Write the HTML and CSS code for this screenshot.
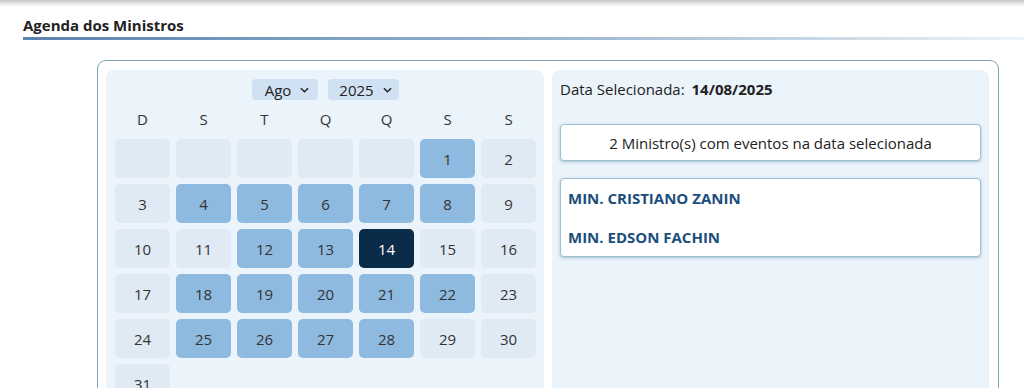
FILE: index.html
```html
<!DOCTYPE html>
<html lang="pt-BR">
<head>
<meta charset="utf-8">
<title>Agenda dos Ministros</title>
<link rel="stylesheet" href="styles.css">
</head>
<body>
<div class="topbar"></div>
<header class="page-head">
  <h1 class="page-title">Agenda dos Ministros</h1>
  <div class="title-rule"></div>
</header>
<main class="agenda">
  <section class="panel calendar">
    <div class="selects">
      <div class="sel sel-month">Ago <svg class="chev" viewBox="0 0 10 6" width="9" height="6"><path d="M1 1l4 4 4-4" fill="none" stroke="#222" stroke-width="1.6"/></svg></div>
      <div class="sel sel-year">2025 <svg class="chev" viewBox="0 0 10 6" width="9" height="6"><path d="M1 1l4 4 4-4" fill="none" stroke="#222" stroke-width="1.6"/></svg></div>
    </div>
    <div class="grid">
      <div class="dow">D</div><div class="dow">S</div><div class="dow">T</div><div class="dow">Q</div><div class="dow">Q</div><div class="dow">S</div><div class="dow">S</div>
      <div class="day"></div><div class="day"></div><div class="day"></div><div class="day"></div><div class="day"></div><div class="day ev">1</div><div class="day">2</div>
      <div class="day">3</div><div class="day ev">4</div><div class="day ev">5</div><div class="day ev">6</div><div class="day ev">7</div><div class="day ev">8</div><div class="day">9</div>
      <div class="day">10</div><div class="day">11</div><div class="day ev">12</div><div class="day ev">13</div><div class="day sel-day">14</div><div class="day">15</div><div class="day">16</div>
      <div class="day">17</div><div class="day ev">18</div><div class="day ev">19</div><div class="day ev">20</div><div class="day ev">21</div><div class="day ev">22</div><div class="day">23</div>
      <div class="day">24</div><div class="day ev">25</div><div class="day ev">26</div><div class="day ev">27</div><div class="day ev">28</div><div class="day">29</div><div class="day">30</div>
      <div class="day">31</div>
    </div>
  </section>
  <section class="panel details">
    <p class="selected-date">Data Selecionada: <strong>14/08/2025</strong></p>
    <div class="box summary">2 Ministro(s) com eventos na data selecionada</div>
    <div class="box ministers">
      <div class="minister">MIN. CRISTIANO ZANIN</div>
      <div class="minister">MIN. EDSON FACHIN</div>
    </div>
  </section>
</main>
</body>
</html>
```
FILE: styles.css
```css
* { box-sizing: border-box; }
html, body { margin: 0; padding: 0; background: #fff; }
body {
  font-family: "Open Sans", "Noto Sans", sans-serif;
  color: #222;
  height: 388px;
  overflow: hidden;
}
.topbar {
  height: 7px;
  background: linear-gradient(#c4c4c4, #e6e6e6 50%, #fff);
}
.page-head { padding: 0 0 0 23px; }
.page-title {
  margin: 8px 0 0;
  font-size: 15px;
  font-weight: 700;
  line-height: 20px;
  color: #222;
}
.title-rule {
  height: 3px;
  margin-top: 2px;
  background: linear-gradient(90deg, #5b83b0 0%, #88a8c8 40%, #b7cbdc 70%, #eef3f7 100%);
}
.agenda {
  margin: 20px 25px 0 97px;
  border: 1.5px solid #7ea4b6;
  border-bottom: none;
  border-radius: 9px 9px 0 0;
  padding: 9px 9px 0 8px;
  display: flex;
  gap: 8px;
  height: 340px;
}
.panel {
  flex: 1;
  background: #ebf3fb;
  border-radius: 8px 8px 0 0;
  padding: 9px 8px 0 9px;
}
.details { padding-left: 8px; }
.selects {
  display: flex;
  justify-content: center;
  gap: 10px;
  height: 21px;
}
.sel {
  display: flex;
  align-items: center;
  justify-content: center;
  gap: 9px;
  background: #cfe1f2;
  border-radius: 4px;
  font-size: 15px;
  color: #222;
  height: 21px;
}
.sel-month { width: 66px; padding-left: 4px; }
.sel-year { width: 71px; padding-left: 4px; }
.chev { display: block; margin-top: 1px; }
.grid {
  display: grid;
  grid-template-columns: repeat(7, 55px);
  grid-template-rows: 33px;
  grid-auto-rows: 39px;
  column-gap: 6px;
  row-gap: 6px;
}
.dow {
  display: flex;
  align-items: center;
  justify-content: center;
  padding-top: 5px;
  font-size: 15px;
  color: #333;
}
.day {
  background: #e0eaf4;
  border-radius: 5px;
  display: flex;
  align-items: center;
  justify-content: center;
  font-size: 15px;
  color: #333;
}
.day.ev { background: #8fbae0; }
.day.sel-day { background: #0b2c48; color: #fff; }
.selected-date {
  margin: 0;
  font-size: 15px;
  line-height: 20px;
  color: #222;
}
.selected-date strong { font-weight: 700; margin-left: 3px; }
.box {
  background: #fff;
  border: 1px solid #9cc0d2;
  border-radius: 4px;
  box-shadow: 0 1px 3px rgba(80, 130, 160, 0.45);
}
.summary {
  margin-top: 25px;
  height: 37px;
  display: flex;
  align-items: center;
  justify-content: center;
  font-size: 15px;
  color: #222;
}
.ministers {
  margin-top: 17px;
  height: 79px;
  padding: 9px 7px 0;
}
.minister {
  font-size: 15px;
  font-weight: 700;
  color: #1c4e7b;
  line-height: 20px;
  margin-bottom: 19px;
}
```
